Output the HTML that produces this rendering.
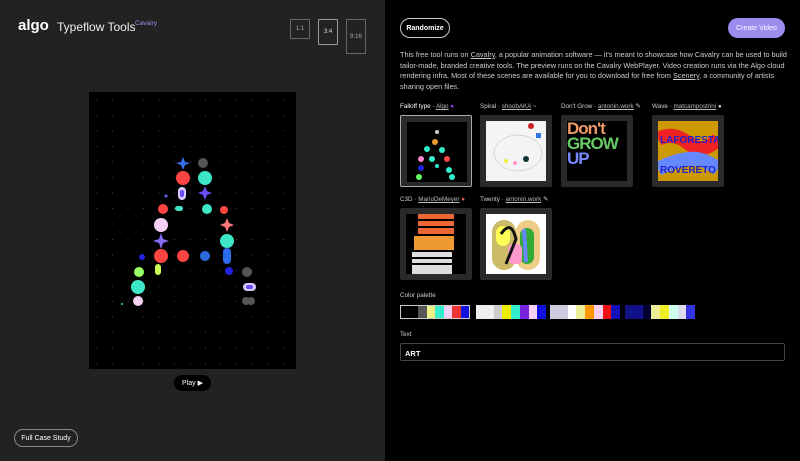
<!DOCTYPE html><html><head><style>
*{margin:0;padding:0;box-sizing:border-box}
body{width:800px;height:461px;overflow:hidden;font-family:"Liberation Sans",sans-serif;background:#000;position:relative;color:#fff}
.l{position:absolute;left:0;top:0;width:385px;height:461px;background:#222}
.a{position:absolute}
.rb{position:absolute;border:1px solid #666;color:#aaa;font-size:6px;display:flex;align-items:center;justify-content:center}
.lab{position:absolute;font-size:6.3px;color:#ccc;top:103px;white-space:nowrap}
.lab u{color:#bbb}
.th{position:absolute;width:72px;height:72px;background:#2a2a2a;border-radius:2px}
.th .in{position:absolute;left:6px;top:6px;width:60px;height:60px}
.pal{position:absolute;top:305px;height:14px;width:70px;display:flex}
.pal div{flex:1}
</style></head><body>
<div class="l"></div>
<div class="a" style="left:18px;top:17px;font-size:15px;font-weight:bold">algo</div>
<div class="a" style="left:57px;top:20px;font-size:12px;color:#eee">Typeflow Tools</div>
<div class="a" style="left:135px;top:20px;font-size:6.5px;color:#9b8cf0">Cavalry</div>
<div class="rb" style="left:290px;top:19px;width:20px;height:20px">1:1</div>
<div class="rb" style="left:318px;top:19px;width:20px;height:26px;border-color:#999;color:#ddd">3:4</div>
<div class="rb" style="left:346px;top:19px;width:20px;height:35px">9:16</div>
<svg class="a" style="left:89px;top:92px" width="207" height="277" viewBox="89 92 207 277">
<defs><pattern id="g" x="89" y="92" width="15.5" height="15.5" patternUnits="userSpaceOnUse"><circle cx="8" cy="8" r="0.5" fill="#555"/></pattern></defs>
<rect x="89" y="92" width="207" height="277" fill="#000"/><rect x="89" y="92" width="207" height="277" fill="url(#g)"/>
<path d="M183 157l2 5 5 1-5 2-2 5-2-5-5-2 5-1z" fill="#3a6ef0"/>
<circle cx="203" cy="163" r="5" fill="#555"/>
<circle cx="183" cy="178" r="7" fill="#f44"/><circle cx="205" cy="178" r="7" fill="#3ee6c8"/>
<rect x="178" y="187" width="8" height="13" rx="4" fill="#d8c8ff"/><rect x="180" y="190" width="4" height="7" rx="2" fill="#6b4cf5"/>
<path d="M205 186l2 5 5 2-5 2-2 5-2-5-5-2 5-2z" fill="#6b4cf5"/>
<circle cx="166" cy="196" r="1.5" fill="#66f"/>
<circle cx="163" cy="209" r="5" fill="#f44"/><rect x="175" y="206" width="8" height="5" rx="2.5" fill="#3ee6c8"/>
<circle cx="207" cy="209" r="5" fill="#3ee6c8"/><circle cx="224" cy="210" r="4" fill="#f44"/>
<circle cx="161" cy="225" r="7" fill="#f4d0f4"/>
<path d="M227 218l2 5 5 2-5 2-2 5-2-5-5-2 5-2z" fill="#f77"/>
<path d="M161 233l2 6 6 2-6 2-2 6-2-6-6-2 6-2z" fill="#8a6bf5"/>
<circle cx="227" cy="241" r="7" fill="#3ee6c8"/>
<circle cx="142" cy="257" r="3" fill="#22d"/>
<circle cx="161" cy="256" r="7" fill="#f44"/><circle cx="183" cy="256" r="6" fill="#f44"/>
<circle cx="205" cy="256" r="5" fill="#2a6ce0"/>
<rect x="223" y="248" width="8" height="16" rx="4" fill="#2a6cf0"/>
<circle cx="139" cy="272" r="5" fill="#9f6"/>
<rect x="155" y="264" width="6" height="11" rx="3" fill="#cf5"/>
<circle cx="229" cy="271" r="4" fill="#22d"/><circle cx="247" cy="272" r="5" fill="#555"/>
<circle cx="138" cy="287" r="7" fill="#3ee6c8"/>
<rect x="243" y="283" width="13" height="8" rx="4" fill="#d8c8ff"/><rect x="246" y="285" width="7" height="4" rx="2" fill="#6b4cf5"/>
<circle cx="138" cy="301" r="5" fill="#f4d0f4"/>
<circle cx="246" cy="301" r="4" fill="#555"/><circle cx="251" cy="301" r="4" fill="#555"/>
<circle cx="122" cy="304" r="1" fill="#3e8"/>
</svg>
<div class="a" style="left:174px;top:375px;width:37px;height:16px;border-radius:8px;background:#000;font-size:7px;display:flex;align-items:center;justify-content:center">Play ▶</div>
<div class="a" style="left:14px;top:429px;width:64px;height:18px;border-radius:9px;border:1px solid #888;font-size:7px;display:flex;align-items:center;justify-content:center">Full Case Study</div>
<div class="a" style="left:400px;top:18px;width:50px;height:20px;border-radius:10px;border:1px solid #ccc;font-size:7px;font-weight:bold;display:flex;align-items:center;justify-content:center">Randomize</div>
<div class="a" style="left:728px;top:18px;width:57px;height:20px;border-radius:10px;background:#9b8cf0;font-size:7px;display:flex;align-items:center;justify-content:center">Create Video</div>
<div class="a" style="left:400px;top:50px;width:392px;font-size:7.3px;line-height:10.5px;color:#ccc">This free tool runs on <u>Cavalry</u>, a popular animation software — it's meant to showcase how Cavalry can be used to build tailor-made, branded creative tools. The preview runs on the Cavalry WebPlayer. Video creation runs via the Algo cloud rendering infra. Most of these scenes are available for you to download for free from <u>Scenery</u>, a community of artists sharing open files.</div>
<div class="lab" style="left:400px;color:#fff">Falloff type · <u>Algo</u> <span style="color:#84f">●</span></div>
<div class="lab" style="left:480px">Spiral · <u>shoobAKA</u> ~</div>
<div class="lab" style="left:561px">Don't Grow · <u>antonin.work</u> ✎</div>
<div class="lab" style="left:652px">Wave · <u>matcampostrini</u> ●</div>
<div class="lab" style="left:400px;top:196px">C3D · <u>MarioDeMeyer</u> <span style="color:#e55">●</span></div>
<div class="lab" style="left:480px;top:196px">Twenty · <u>antonin.work</u> ✎</div>
<div class="th" style="left:400px;top:115px;border:1px solid #aaa"><div class="in" style="background:#000"><svg width="60" height="60"><circle cx="30" cy="10" r="2" fill="#ccc"/><circle cx="28" cy="20" r="3" fill="#e93"/><circle cx="20" cy="27" r="3" fill="#3ec"/><circle cx="35" cy="28" r="3" fill="#3ec"/><circle cx="14" cy="37" r="3" fill="#f8c"/><circle cx="25" cy="37" r="3" fill="#3ec"/><circle cx="40" cy="37" r="3" fill="#f44"/><circle cx="14" cy="46" r="3" fill="#22d"/><circle cx="30" cy="44" r="2" fill="#3ec"/><circle cx="42" cy="48" r="3" fill="#3ec"/><circle cx="12" cy="55" r="3" fill="#6f6"/><circle cx="45" cy="55" r="3" fill="#3ec"/></svg></div></div>
<div class="th" style="left:480px;top:115px"><div class="in" style="background:#f4f4f4"><svg width="60" height="60"><ellipse cx="32" cy="32" rx="24" ry="18" fill="none" stroke="#bbb" stroke-width=".5"/><circle cx="45" cy="5" r="3" fill="#c22"/><rect x="50" y="12" width="5" height="5" fill="#37d"/><circle cx="40" cy="38" r="3" fill="#133"/><circle cx="20" cy="40" r="2" fill="#ee3"/><circle cx="29" cy="42" r="2" fill="#f9c"/></svg></div></div>
<div class="th" style="left:561px;top:115px"><div class="in" style="background:#000;font-size:17px;font-weight:bold;line-height:15px;color:#e96;letter-spacing:-1px">Don't<br><span style="color:#6c6">GROW</span><br><span style="color:#78f">UP</span></div></div>
<div class="th" style="left:652px;top:115px"><div class="in" style="background:#c90;overflow:hidden"><svg width="60" height="60"><path d="M0 18 Q15 10 30 22 T60 18" stroke="#e22" stroke-width="14" fill="none"/><path d="M0 48 Q15 40 30 38 T60 48" stroke="#68f" stroke-width="14" fill="none"/><text x="2" y="22" font-size="10" font-weight="bold" fill="#22c" font-family="Liberation Sans">LAFORESTA</text><text x="2" y="52" font-size="10" font-weight="bold" fill="#22c" font-family="Liberation Sans">ROVERETO</text></svg></div></div>
<div class="th" style="left:400px;top:208px"><div class="in" style="background:#000"><svg width="60" height="60"><rect x="12" y="0" width="36" height="20" fill="#e63"/><rect x="8" y="22" width="40" height="14" fill="#e93"/><rect x="6" y="38" width="40" height="22" fill="#ddd"/><g stroke="#000" stroke-width="2"><line x1="6" y1="44" x2="46" y2="44"/><line x1="6" y1="50" x2="46" y2="50"/><line x1="12" y1="6" x2="48" y2="6"/><line x1="12" y1="13" x2="48" y2="13"/></g></svg></div></div>
<div class="th" style="left:480px;top:208px"><div class="in" style="background:#fff"><svg width="60" height="60"><rect x="6" y="6" width="24" height="50" rx="12" fill="#cb6"/><rect x="30" y="6" width="24" height="50" rx="12" fill="#ec8"/><rect x="10" y="12" width="14" height="20" rx="7" fill="#ff5"/><rect x="34" y="14" width="14" height="36" rx="7" fill="#3a3"/><rect x="22" y="30" width="14" height="20" rx="5" fill="#f9c"/><path d="M15 20 Q25 5 30 25 L20 50" stroke="#111" stroke-width="3" fill="none"/><path d="M38 15 L40 48" stroke="#68f" stroke-width="4"/></svg></div></div>
<div class="lab" style="left:400px;top:292px">Color palette</div>
<div class="pal" style="left:400px;border:1px solid #ccc"><div style="background:#000;flex:2"></div><div style="background:#555"></div><div style="background:#ee8"></div><div style="background:#3ec"></div><div style="background:#f8d0f4"></div><div style="background:#e33"></div><div style="background:#11d"></div></div>
<div class="pal" style="left:476px"><div style="background:#eee;flex:2"></div><div style="background:#ccc"></div><div style="background:#ee0"></div><div style="background:#3ec"></div><div style="background:#72d"></div><div style="background:#f8d0f4"></div><div style="background:#11d"></div></div>
<div class="pal" style="left:550px"><div style="background:#ccd;flex:2"></div><div style="background:#fff"></div><div style="background:#ee9"></div><div style="background:#f90"></div><div style="background:#f8d0f4"></div><div style="background:#e11"></div><div style="background:#11b"></div></div>
<div class="pal" style="left:625px"><div style="background:#118;flex:2"></div><div style="background:#003"></div><div style="background:#ee9"></div><div style="background:#ee2"></div><div style="background:#cfe"></div><div style="background:#dde"></div><div style="background:#33d"></div></div>
<div class="lab" style="left:400px;top:331px">Text</div>
<div class="a" style="left:400px;top:343px;width:385px;height:18px;border:1px solid #444;border-radius:2px;font-size:7.5px;font-weight:bold;padding:5px 4px">ART</div>
</body></html>
